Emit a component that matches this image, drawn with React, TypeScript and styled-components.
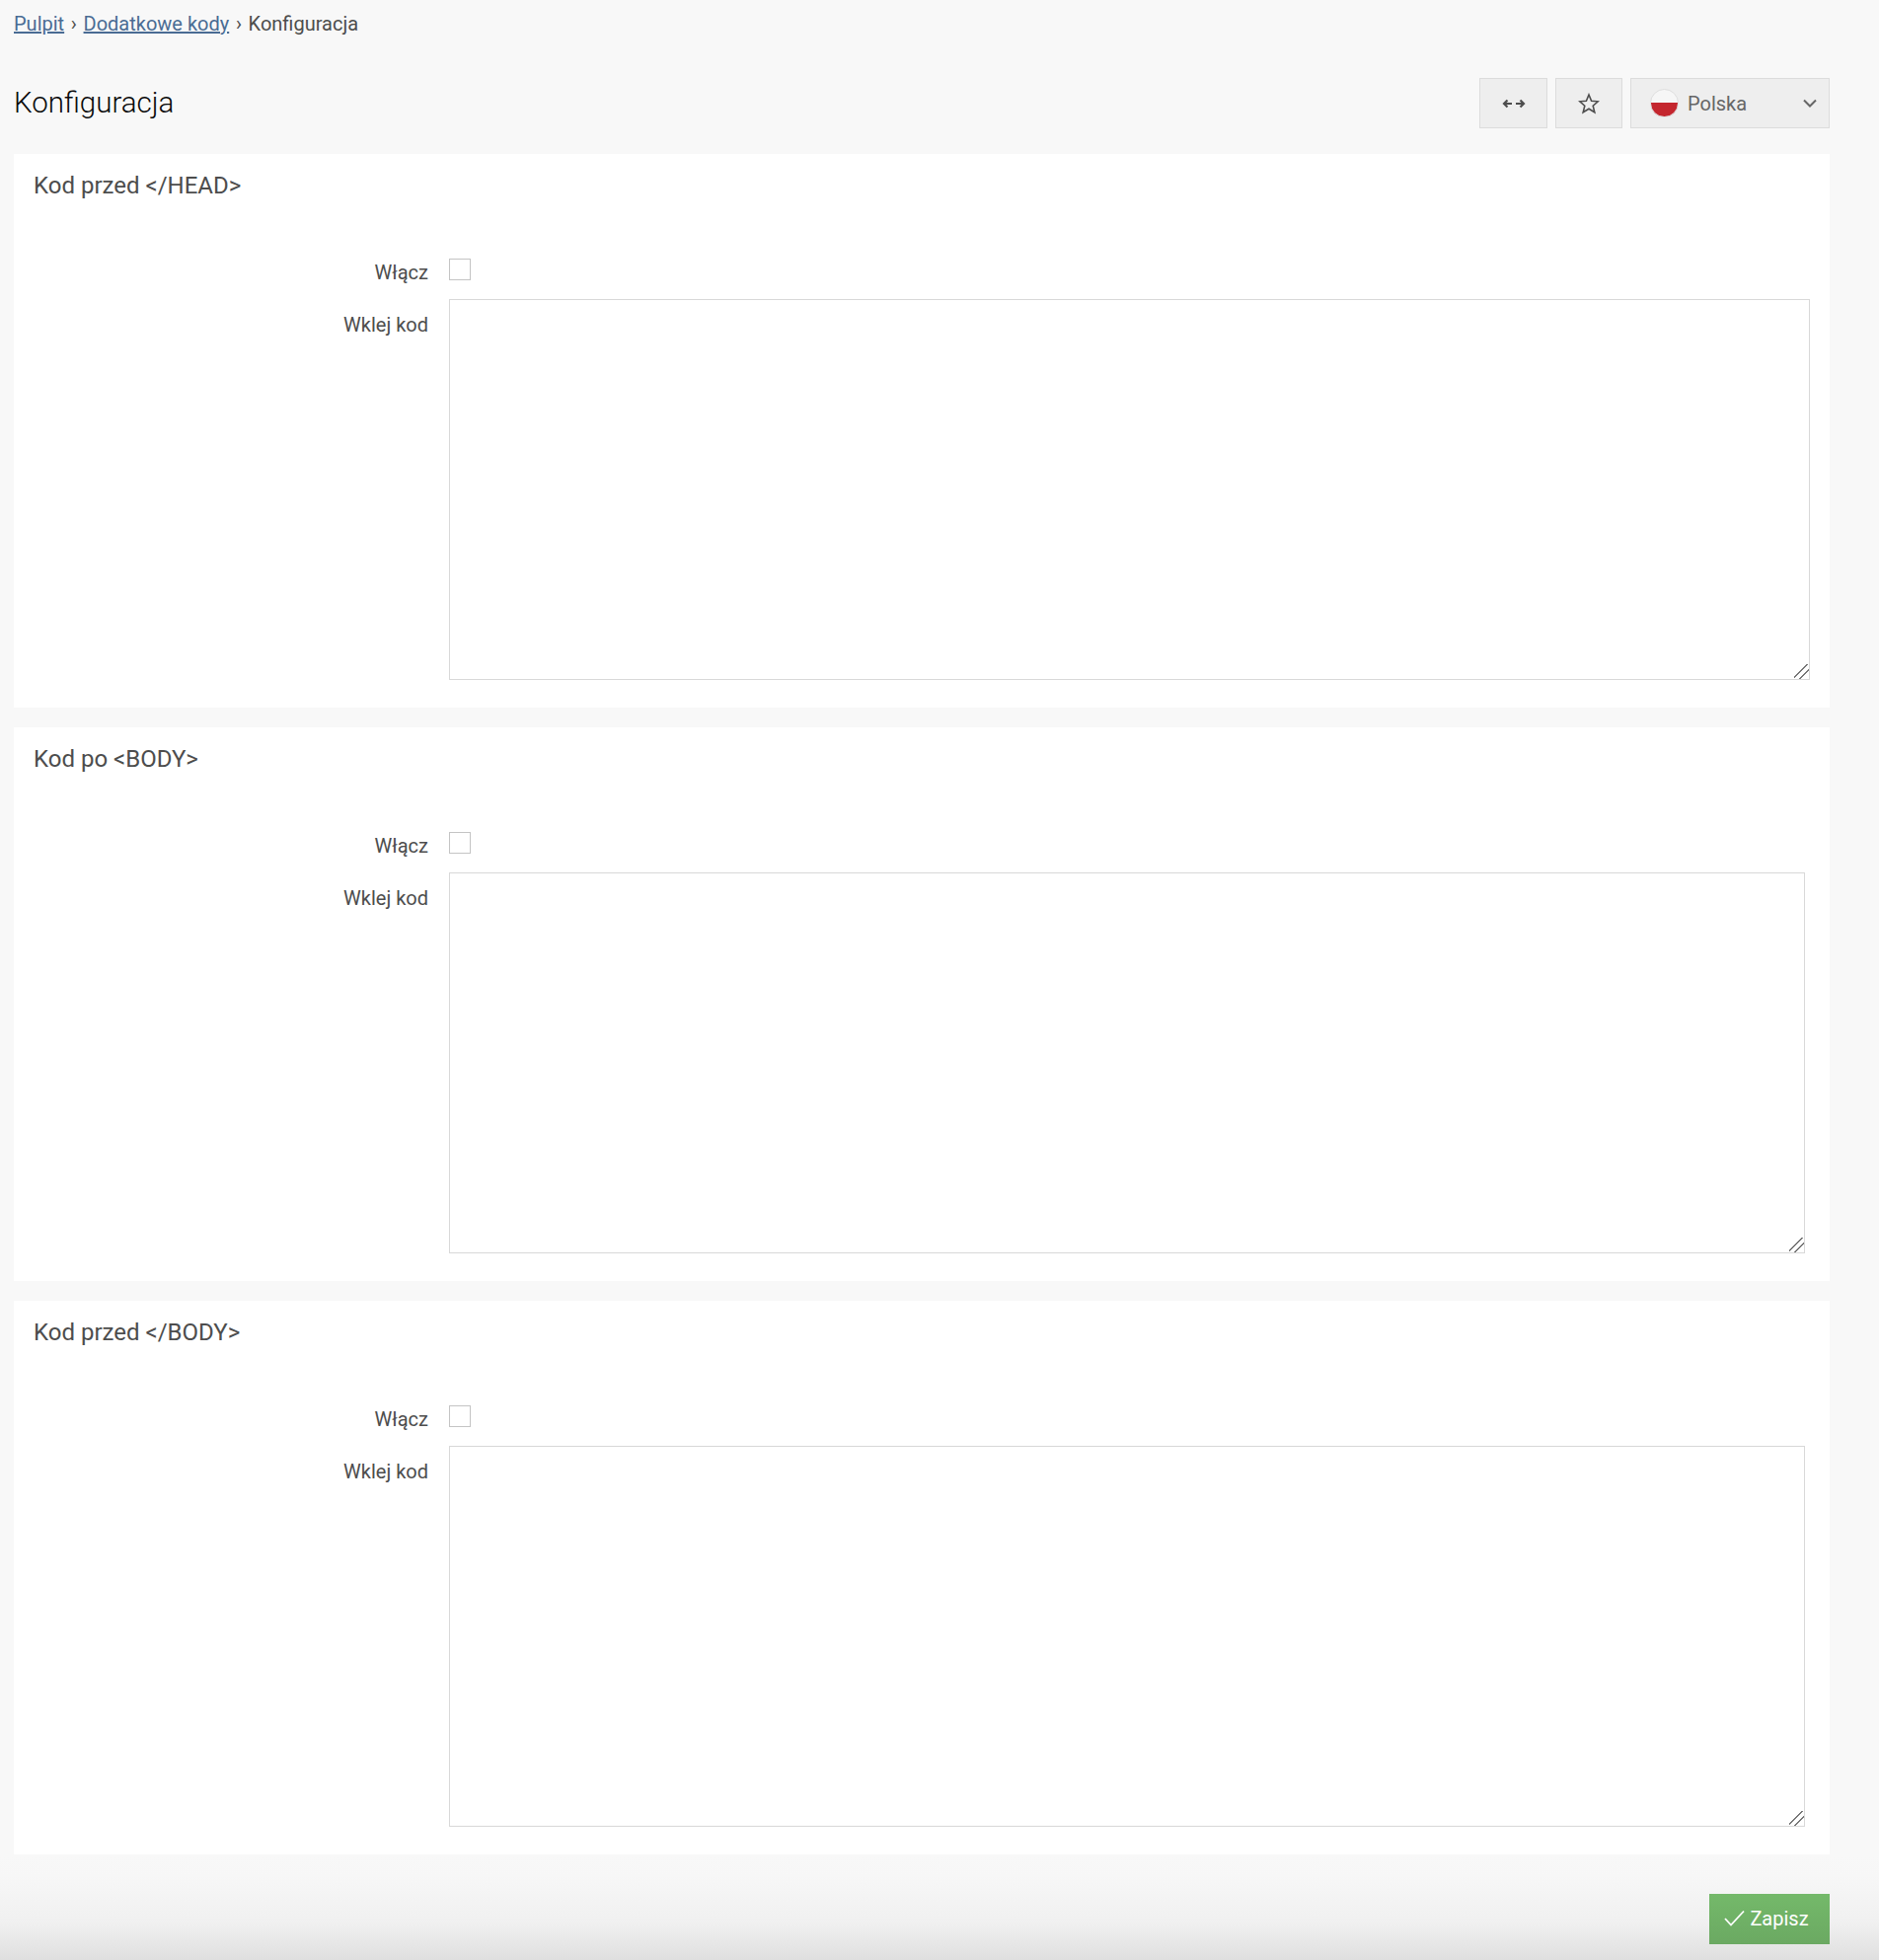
import React from "react";
import styled, { createGlobalStyle } from "styled-components";

const Global = createGlobalStyle`
  html, body { margin: 0; padding: 0; background: #f8f8f8; }
  body { font-family: Roboto, "Liberation Sans", sans-serif; color: #4d4d4d; }
  * { box-sizing: border-box; }
`;

const Main = styled.main`
  padding: 0 50px 0 14px;
`;

const Breadcrumb = styled.nav`
  height: 48px;
  line-height: 48px;
  font-size: 20px;
  color: #4d4d4d;
  white-space: nowrap;
`;

const Crumb = styled.a`
  color: #4a6c94;
  text-decoration: underline;
`;

const Sep = styled.span`
  margin: 0 6.7px;
`;

const Header = styled.header`
  display: flex;
  align-items: center;
  justify-content: space-between;
  height: 51px;
  margin: 31px 0 26px;
`;

const Title = styled.h1`
  margin: 0 0 2px;
  font-size: 29.5px;
  font-weight: 300;
  color: #0a0a0a;
`;

const Tools = styled.div`
  display: flex;
  gap: 8px;
`;

const ToolButton = styled.button<{ $w: number }>`
  display: flex;
  align-items: center;
  justify-content: center;
  width: ${(p) => p.$w}px;
  height: 51px;
  padding: 0;
  border: 1px solid #dcdcdc;
  background: #eeeeee;
  color: #4d4d4d;
  font: inherit;
`;

const LangSelect = styled(ToolButton)`
  justify-content: flex-start;
  padding: 0 12px 0 20px;
  font-size: 20px;
  color: #666;
`;

const Flag = styled.span`
  width: 29px;
  height: 29px;
  margin-left: -1px;
  border-radius: 50%;
  margin-right: 9px;
  border: 1px solid #dedede;
  background: linear-gradient(#f6f6f6 0 50%, #c4262e 50% 100%);
`;

const Chevron = styled.span`
  display: flex;
  margin-left: auto;
  color: #666;
`;

const Cards = styled.div`
  display: flex;
  flex-direction: column;
  gap: 20px;
`;

const Card = styled.section`
  height: 561px;
  background: #fff;
  padding: 17px 20px 0;
`;

const CardTitle = styled.h2`
  margin: 0;
  height: 30px;
  line-height: 30px;
  font-size: 24px;
  font-weight: 400;
  color: #4d4d4d;
`;

const FormRow = styled.div<{ $top: number }>`
  display: grid;
  grid-template-columns: 400px 1fr;
  column-gap: 21px;
  margin-top: ${(p) => p.$top}px;
`;

const Label = styled.label<{ $pad: number }>`
  text-align: right;
  font-size: 20px;
  line-height: 28px;
  padding-top: ${(p) => p.$pad}px;
  color: #4d4d4d;
`;

const Check = styled.input`
  appearance: none;
  display: block;
  width: 22px;
  height: 22px;
  margin: 0;
  border: 1px solid #c4c4c4;
  background: #fff;
`;

const Code = styled.textarea<{ $inset: number }>`
  display: block;
  width: calc(100% - ${(p) => p.$inset}px);
  height: 386px;
  margin: 0;
  padding: 8px;
  border: 1px solid #d8d8d8;
  border-radius: 0;
  outline: none;
  background: #fff;
  resize: both;

  &::-webkit-resizer {
    background: linear-gradient(
      135deg,
      transparent 42%,
      #777 42%,
      #777 49%,
      transparent 49%,
      transparent 65%,
      #777 65%,
      #777 72%,
      transparent 72%
    );
  }
`;

const Footer = styled.footer`
  display: flex;
  justify-content: flex-end;
  height: 107px;
  padding: 40px 50px 0 14px;
  background: linear-gradient(#f8f8f8 0, #f7f7f7 20%, #f0f0f0 65%, #dfdfdf 100%);
`;

const Save = styled.button`
  display: flex;
  align-items: center;
  justify-content: center;
  gap: 5px;
  width: 122px;
  height: 51px;
  padding: 0 6px 2px 0;
  border: 0;
  background: linear-gradient(#74b96a, #6ba962);
  color: #fff;
  font: inherit;
  font-size: 20px;
`;

const ArrowsIcon = () => (
  <svg width="24" height="12" viewBox="0 0 24 12" fill="none" stroke="currentColor" strokeWidth="2.2">
    <path d="M10 6H2M5.5 2.5 2 6l3.5 3.5" />
    <path d="M14 6h8M18.5 2.5 22 6l-3.5 3.5" />
  </svg>
);

const StarIcon = () => (
  <svg width="22" height="22" viewBox="0 0 22 22" fill="none" stroke="currentColor" strokeWidth="1.6" strokeLinejoin="miter">
    <path d="M11 2l2.6 6.3 6.6.5-5 4.4 1.6 6.6L11 16.3 5.2 19.8l1.6-6.6-5-4.4 6.6-.5z" />
  </svg>
);

const ChevronIcon = () => (
  <svg width="14" height="9" viewBox="0 0 14 9" fill="none" stroke="currentColor" strokeWidth="2">
    <path d="M1 1.5 7 7.5 13 1.5" />
  </svg>
);

const CheckIcon = () => (
  <svg width="21" height="17" viewBox="0 0 21 17" fill="none" stroke="currentColor" strokeWidth="1.8">
    <path d="M1 9l6 6.5L20 1.5" />
  </svg>
);

const sections = [
  { title: "Kod przed </HEAD>", inset: 0 },
  { title: "Kod po <BODY>", inset: 5 },
  { title: "Kod przed </BODY>", inset: 5 },
];

export default function App() {
  return (
    <>
      <Global />
      <Main>
        <Breadcrumb>
          <Crumb href="#">Pulpit</Crumb>
          <Sep>›</Sep>
          <Crumb href="#">Dodatkowe kody</Crumb>
          <Sep>›</Sep>
          Konfiguracja
        </Breadcrumb>
        <Header>
          <Title>Konfiguracja</Title>
          <Tools>
            <ToolButton $w={69}><ArrowsIcon /></ToolButton>
            <ToolButton $w={68}><StarIcon /></ToolButton>
            <LangSelect $w={202}>
              <Flag />
              Polska
              <Chevron><ChevronIcon /></Chevron>
            </LangSelect>
          </Tools>
        </Header>
        <Cards>
          {sections.map((s) => (
            <Card key={s.title}>
              <CardTitle>{s.title}</CardTitle>
              <FormRow $top={59}>
                <Label $pad={0}>Włącz</Label>
                <Check type="checkbox" />
              </FormRow>
              <FormRow $top={13}>
                <Label $pad={12}>Wklej kod</Label>
                <Code $inset={s.inset} />
              </FormRow>
            </Card>
          ))}
        </Cards>
      </Main>
      <Footer>
        <Save><CheckIcon />Zapisz</Save>
      </Footer>
    </>
  );
}
